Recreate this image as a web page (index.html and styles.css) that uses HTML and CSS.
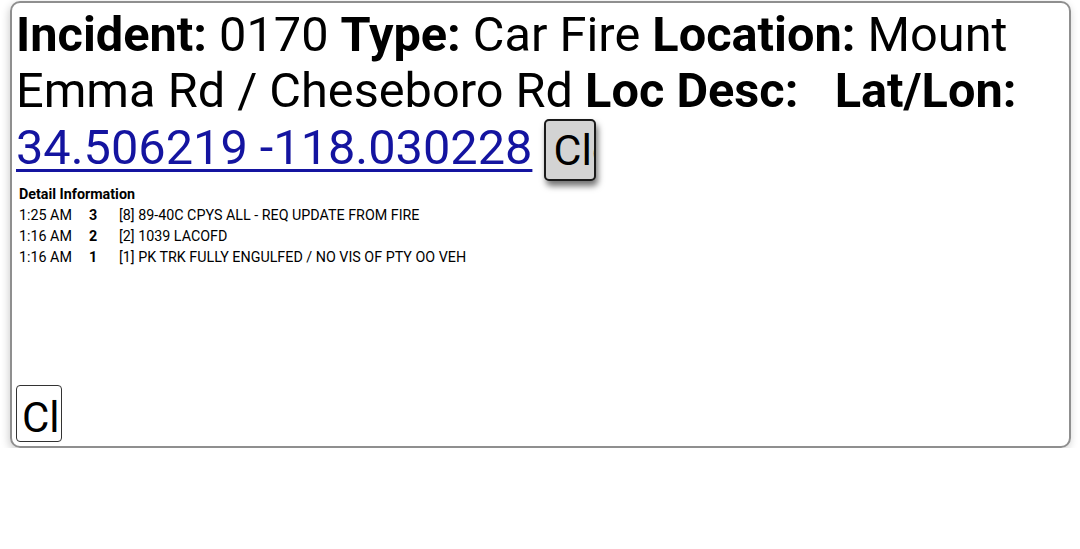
FILE: index.html
```html
<!DOCTYPE html>
<html>
<head>
<meta charset="utf-8">
<link rel="stylesheet" href="styles.css">
</head>
<body>
<div class="card">
  <div class="headline"><b>Incident:</b> 0170 <b>Type:</b> Car Fire <b>Location:</b> Mount Emma Rd / Cheseboro Rd <b>Loc Desc:</b> &nbsp; <b>Lat/Lon:</b> <a class="coords" href="#">34.506219 -118.030228</a> <button class="btn-top">Close</button></div>
  <div class="details">
    <div class="details-title">Detail Information</div>
    <div class="rows">
      <div class="row"><span>1:25 AM</span><b>3</b><span>[8] 89-40C CPYS ALL - REQ UPDATE FROM FIRE</span></div>
      <div class="row"><span>1:16 AM</span><b>2</b><span>[2] 1039 LACOFD</span></div>
      <div class="row"><span>1:16 AM</span><b>1</b><span>[1] PK TRK FULLY ENGULFED / NO VIS OF PTY OO VEH</span></div>
    </div>
  </div>
  <div class="footer"><button class="btn-bottom">Close</button></div>
</div>
</body>
</html>
```
FILE: styles.css
```css
html, body {
  margin: 0;
  background: #fff;
}
body {
  padding: 1px 9px 0 10px;
  font-family: Roboto, "Noto Sans", sans-serif;
  color: #000;
}
.card {
  box-sizing: border-box;
  height: 447px;
  border: 2px solid #8f8f8f;
  border-radius: 10px;
  box-shadow: -1px 3px 8px rgba(0, 0, 0, 0.2);
  padding: 4px 4px 0 4px;
  display: flex;
  flex-direction: column;
}
.headline {
  font-size: 48.7px;
  line-height: 56px;
}
.headline b {
  font-weight: 700;
}
.coords {
  color: #1414a0;
  text-decoration: underline;
  text-decoration-thickness: 3px;
  text-underline-offset: 5px;
}
.btn-top {
  box-sizing: border-box;
  font-family: Roboto, sans-serif;
  font-size: 43px;
  line-height: 50px;
  width: 52px;
  height: 62px;
  padding: 0 0 0 7px;
  overflow: hidden;
  white-space: nowrap;
  text-align: left;
  vertical-align: -1px;
  background: #d3d3d3;
  color: #000;
  border: 2px solid #1a1a1a;
  border-radius: 5px;
  box-shadow: 2px 5px 6px rgba(0, 0, 0, 0.55);
}
.details {
  margin: 3px 0 0 3px;
  font-size: 14.3px;
  line-height: 21px;
}
.details-title {
  font-weight: 700;
  line-height: 21px;
}
.rows {
  display: flex;
  flex-direction: column;
}
.row {
  display: grid;
  grid-template-columns: 70px 30px auto;
}
.row b {
  font-weight: 700;
}
.footer {
  margin-top: auto;
  padding: 0 0 4px 0;
}
.btn-bottom {
  box-sizing: border-box;
  display: block;
  font-family: Roboto, sans-serif;
  font-size: 42px;
  line-height: 49px;
  width: 46px;
  height: 57px;
  padding: 7px 0 0 5px;
  overflow: hidden;
  white-space: nowrap;
  text-align: left;
  background: #fff;
  color: #000;
  border: 1px solid #333;
  border-radius: 4px;
}
```
